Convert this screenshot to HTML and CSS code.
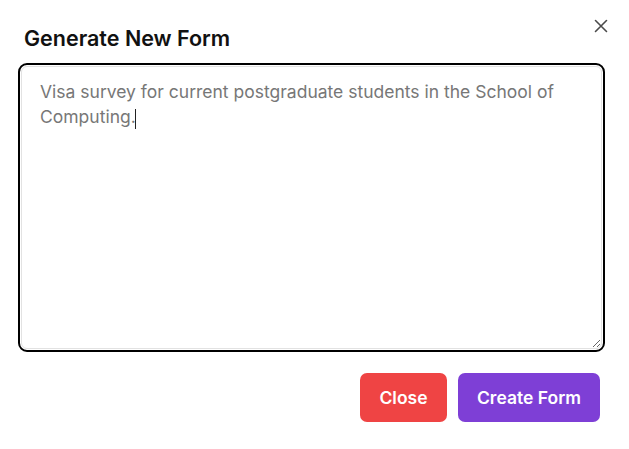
FILE: index.html
```
<!DOCTYPE html>
<html>
<head>
<meta charset="utf-8">
<link rel="stylesheet" href="styles.css">
</head>
<body>
<div class="modal">
  <button class="close-x" aria-label="Close">
    <svg width="14" height="14" viewBox="0 0 14 14"><path d="M1.5 1.5 L12.5 12.5 M12.5 1.5 L1.5 12.5" stroke="#4b4b4b" stroke-width="1.6" stroke-linecap="round"/></svg>
  </button>
  <h2 class="title">Generate New Form</h2>
  <div class="ring">
    <textarea class="prompt">Visa survey for current postgraduate students in the School of Computing.</textarea>
    <span class="caret"></span>
  </div>
  <div class="actions">
    <button class="btn btn-close">Close</button>
    <button class="btn btn-create">Create Form</button>
  </div>
</div>
</body>
</html>
```
FILE: styles.css
```
* { box-sizing: border-box; }
html, body { margin: 0; background: #fff; }
body { font-family: Inter, "Noto Sans", sans-serif; }
.modal {
  position: relative;
  width: 629px;
  height: 449px;
  padding: 25px 24px 0 18px;
}
.close-x {
  position: absolute;
  top: 19px;
  right: 21px;
  border: 0;
  background: none;
  padding: 0;
  width: 14px;
  height: 14px;
  cursor: pointer;
}
.close-x svg { display: block; }
.title {
  margin: 0 0 12px 6px;
  font-size: 21.5px;
  line-height: 26px;
  font-weight: 600;
  color: #111;
}
.ring {
  position: relative;
  width: 587px;
  height: 289px;
  border: 2px solid #000;
  border-radius: 9px;
  padding: 1px;
}
.prompt {
  display: block;
  width: 100%;
  height: 100%;
  border: 1px solid #e2e2e2;
  border-radius: 6px;
  padding: 12px 18px 11px;
  font-family: Inter, "Noto Sans", sans-serif;
  font-size: 17.5px;
  line-height: 25px;
  color: #777;
  outline: none;
  resize: vertical;
}
.caret {
  position: absolute;
  left: 115px;
  top: 44px;
  width: 1px;
  height: 20px;
  background: #222;
}
.actions {
  display: flex;
  justify-content: flex-end;
  gap: 11px;
  margin-top: 21px;
  padding-right: 5px;
}
.btn {
  height: 49px;
  border: 0;
  border-radius: 7px;
  color: #fff;
  font-family: Inter, "Noto Sans", sans-serif;
  font-size: 17.5px;
  font-weight: 600;
  padding: 0 18px;
  cursor: pointer;
}
.btn-close { background: #ef4444; width: 87px; }
.btn-create { background: #7e3fd6; width: 142px; }
```
